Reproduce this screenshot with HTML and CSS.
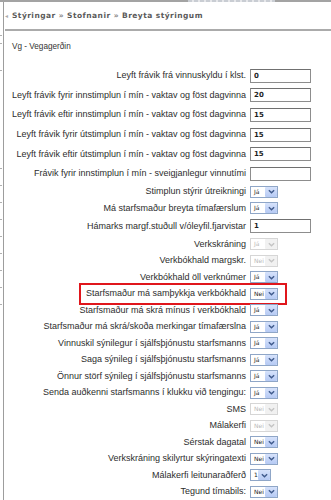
FILE: index.html
```html
<!DOCTYPE html>
<html lang="is">
<head>
<meta charset="utf-8">
<title>Breyta stýringum</title>
<link rel="stylesheet" href="styles.css">
</head>
<body>
<div class="topbar"><div class="topbar-ghost"></div></div>
<div class="shell">
  <div class="gutter">
    <div class="tick t-a"></div>
    <div class="tick t-b"></div>
    <div class="tick t-c"></div>
    <div class="tick t-d"></div>
    <div class="tick"></div>
    <div class="tick"></div>
    <div class="tick"></div>
    <div class="tick"></div>
    <div class="tick"></div>
    <div class="tick"></div>
    <div class="tick"></div>
    <div class="tick"></div>
  </div>
  <div class="panel">
    <div class="crumbs">
      <span class="crumb-mark">◂</span>
      <span class="crumb-text">Stýringar <span class="sep">»</span> Stofnanir <span class="sep">»</span> Breyta stýringum</span>
    </div>
    <div class="org">Vg - Vegagerðin</div>
    <div class="form">
      <div class="row tall"><span class="lbl">Leyft frávik frá vinnuskyldu í klst.</span><span class="ctl"><input class="field" type="text" value="0" readonly></span></div>
      <div class="row tall"><span class="lbl">Leyft frávik fyrir innstimplun í mín - vaktav og föst dagvinna</span><span class="ctl"><input class="field" type="text" value="20" readonly></span></div>
      <div class="row tall"><span class="lbl">Leyft frávik eftir innstimplun í mín - vaktav og föst dagvinna</span><span class="ctl"><input class="field" type="text" value="15" readonly></span></div>
      <div class="row tall"><span class="lbl">Leyft frávik fyrir útstimplun í mín - vaktav og föst dagvinna</span><span class="ctl"><input class="field" type="text" value="15" readonly></span></div>
      <div class="row tall"><span class="lbl">Leyft frávik eftir útstimplun í mín - vaktav og föst dagvinna</span><span class="ctl"><input class="field" type="text" value="15" readonly></span></div>
      <div class="row tall"><span class="lbl">Frávik fyrir innstimplun í mín - sveigjanlegur vinnutími</span><span class="ctl"><input class="field" type="text" value="" readonly></span></div>
      <div class="row"><span class="lbl">Stimplun stýrir útreikningi</span><span class="ctl"><span class="sel"><span class="v">Já</span><span class="b"><svg viewBox="0 0 8 5" width="7" height="5"><polyline points="1,1 4,4 7,1"/></svg></span></span></span></div>
      <div class="row"><span class="lbl">Má starfsmaður breyta tímafærslum</span><span class="ctl"><span class="sel"><span class="v">Já</span><span class="b"><svg viewBox="0 0 8 5" width="7" height="5"><polyline points="1,1 4,4 7,1"/></svg></span></span></span></div>
      <div class="row tall"><span class="lbl">Hámarks margf.stuðull v/óleyfil.fjarvistar</span><span class="ctl"><input class="field" type="text" value="1" readonly></span></div>
      <div class="row"><span class="lbl">Verkskráning</span><span class="ctl"><span class="sel off"><span class="v">Já</span><span class="b"><svg viewBox="0 0 8 5" width="7" height="5"><polyline points="1,1 4,4 7,1"/></svg></span></span></span></div>
      <div class="row"><span class="lbl">Verkbókhald margskr.</span><span class="ctl"><span class="sel off"><span class="v">Nei</span><span class="b"><svg viewBox="0 0 8 5" width="7" height="5"><polyline points="1,1 4,4 7,1"/></svg></span></span></span></div>
      <div class="row"><span class="lbl">Verkbókhald öll verknúmer</span><span class="ctl"><span class="sel"><span class="v">Já</span><span class="b"><svg viewBox="0 0 8 5" width="7" height="5"><polyline points="1,1 4,4 7,1"/></svg></span></span></span></div>
      <div class="row marked"><span class="lbl">Starfsmaður má samþykkja verkbókhald</span><span class="ctl"><span class="sel"><span class="v">Nei</span><span class="b"><svg viewBox="0 0 8 5" width="7" height="5"><polyline points="1,1 4,4 7,1"/></svg></span></span></span><span class="mark-box"></span></div>
      <div class="row"><span class="lbl">Starfsmaður má skrá mínus í verkbókhald</span><span class="ctl"><span class="sel"><span class="v">Já</span><span class="b"><svg viewBox="0 0 8 5" width="7" height="5"><polyline points="1,1 4,4 7,1"/></svg></span></span></span></div>
      <div class="row"><span class="lbl">Starfsmaður má skrá/skoða merkingar tímafærslna</span><span class="ctl"><span class="sel"><span class="v">Já</span><span class="b"><svg viewBox="0 0 8 5" width="7" height="5"><polyline points="1,1 4,4 7,1"/></svg></span></span></span></div>
      <div class="row"><span class="lbl">Vinnuskil sýnilegur í sjálfsþjónustu starfsmanns</span><span class="ctl"><span class="sel"><span class="v">Já</span><span class="b"><svg viewBox="0 0 8 5" width="7" height="5"><polyline points="1,1 4,4 7,1"/></svg></span></span></span></div>
      <div class="row"><span class="lbl">Saga sýnileg í sjálfsþjónustu starfsmanns</span><span class="ctl"><span class="sel"><span class="v">Já</span><span class="b"><svg viewBox="0 0 8 5" width="7" height="5"><polyline points="1,1 4,4 7,1"/></svg></span></span></span></div>
      <div class="row"><span class="lbl">Önnur störf sýnileg í sjálfsþjónustu starfsmanns</span><span class="ctl"><span class="sel"><span class="v">Já</span><span class="b"><svg viewBox="0 0 8 5" width="7" height="5"><polyline points="1,1 4,4 7,1"/></svg></span></span></span></div>
      <div class="row"><span class="lbl">Senda auðkenni starfsmanns í klukku við tengingu:</span><span class="ctl"><span class="sel"><span class="v">Já</span><span class="b"><svg viewBox="0 0 8 5" width="7" height="5"><polyline points="1,1 4,4 7,1"/></svg></span></span></span></div>
      <div class="row"><span class="lbl">SMS</span><span class="ctl"><span class="sel off"><span class="v">Nei</span><span class="b"><svg viewBox="0 0 8 5" width="7" height="5"><polyline points="1,1 4,4 7,1"/></svg></span></span></span></div>
      <div class="row"><span class="lbl">Málakerfi</span><span class="ctl"><span class="sel off"><span class="v">Nei</span><span class="b"><svg viewBox="0 0 8 5" width="7" height="5"><polyline points="1,1 4,4 7,1"/></svg></span></span></span></div>
      <div class="row"><span class="lbl">Sérstak dagatal</span><span class="ctl"><span class="sel"><span class="v">Nei</span><span class="b"><svg viewBox="0 0 8 5" width="7" height="5"><polyline points="1,1 4,4 7,1"/></svg></span></span></span></div>
      <div class="row"><span class="lbl">Verkskráning skilyrtur skýringatexti</span><span class="ctl"><span class="sel"><span class="v">Nei</span><span class="b"><svg viewBox="0 0 8 5" width="7" height="5"><polyline points="1,1 4,4 7,1"/></svg></span></span></span></div>
      <div class="row"><span class="lbl">Málakerfi leitunaraðferð</span><span class="ctl"><span class="sel narrow"><span class="v">1</span><span class="b"><svg viewBox="0 0 8 5" width="7" height="5"><polyline points="1,1 4,4 7,1"/></svg></span></span></span></div>
      <div class="row"><span class="lbl">Tegund tímabils:</span><span class="ctl"><span class="sel"><span class="v">Nei</span><span class="b"><svg viewBox="0 0 8 5" width="7" height="5"><polyline points="1,1 4,4 7,1"/></svg></span></span></span></div>
    </div>
  </div>
</div>
</body>
</html>
```

FILE: styles.css
```css
* { box-sizing: border-box; }
html, body { margin: 0; padding: 0; background: #fff; }
body {
  width: 331px;
  height: 500px;
  overflow: hidden;
  font-family: "Liberation Sans", Arial, sans-serif;
  color: #2b2b2b;
}
.topbar { height: 2px; background: #a3a3a3; display: flex; }
.topbar-ghost {
  margin-left: 188px;
  width: 87px;
  background: repeating-linear-gradient(90deg, #c9cdd3 0 4px, #e6e7ea 4px 6px);
}
.shell { display: flex; height: 498px; }
.gutter { width: 3px; flex: none; display: flex; flex-direction: column; }
.tick { width: 2px; height: 1px; background: #b0b0b0; margin-top: 16px; }
.tick.t-a { margin-top: 33px; }
.tick.t-b { margin-top: 7px; }
.tick.t-c { margin-top: 26px; }
.tick.t-d { margin-top: 97px; }
.panel {
  flex: 1;
  min-width: 0;
  border-left: 1px solid #9d9d9d;
  padding-left: 8px;
}
.crumbs {
  height: 29px;
  display: flex;
  align-items: center;
  margin-left: -7px;
  border-bottom: 2px solid #ababab;
}
.crumb-mark { width: 7px; font-size: 6px; color: #aaa; flex: none; }
.crumb-text {
  font-family: "DejaVu Sans", Verdana, sans-serif;
  font-weight: bold;
  font-size: 7.5px;
  letter-spacing: 0.45px;
  color: #5a5a5a;
  white-space: nowrap;
}
.crumb-text .sep { color: #8a8a8a; }
.org {
  margin-top: 10px;
  font-size: 8.2px;
  line-height: 12px;
  color: #333;
}
.form { margin-top: 13px; }
.row {
  position: relative;
  display: grid;
  grid-template-columns: 1fr 81px;
  align-items: center;
  height: 16.5px;
}
.row.tall { height: 19.6px; }
.lbl {
  text-align: right;
  padding-right: 4px;
  white-space: nowrap;
  font-size: 9px;
  line-height: 11px;
  color: #2d2d2d;
}
.ctl { display: flex; align-items: center; }
.field {
  display: block;
  width: 61px;
  height: 14px;
  margin: 0;
  padding: 0 0 0 3px;
  border: 1px solid #8d8d8d;
  border-top-color: #707070;
  background: #fff;
  font-family: "DejaVu Sans", Verdana, sans-serif;
  font-weight: bold;
  font-size: 7px;
  line-height: 12px;
  color: #1e1e1e;
  outline: none;
}
.sel {
  display: flex;
  align-items: center;
  width: 28px;
  height: 12px;
  border: 1px solid #8fa6c7;
  background: #fff;
}
.sel.narrow { width: 21px; }
.sel .v {
  flex: 1;
  padding-left: 3px;
  font-family: "DejaVu Sans", Verdana, sans-serif;
  font-size: 6px;
  line-height: 10px;
  color: #222;
}
.sel .b {
  width: 12px;
  height: 10px;
  margin-right: 0;
  border-radius: 1px;
  background: linear-gradient(#d6e2fb, #b6caf4);
  display: flex;
  align-items: center;
  justify-content: center;
}
.sel .b svg { display: block; }
.sel .b polyline { fill: none; stroke: #3f5a8c; stroke-width: 1.6; }
.sel.off { border-color: #d6d6d6; }
.sel.off .v { color: #b8b8b8; }
.sel.off .b { background: #f1f1f1; }
.sel.off .b polyline { stroke: #c4c4c4; }
.mark-box {
  position: absolute;
  left: 67px;
  top: -3px;
  width: 208px;
  height: 22px;
  border: 2px solid #e0161c;
  pointer-events: none;
}
```
